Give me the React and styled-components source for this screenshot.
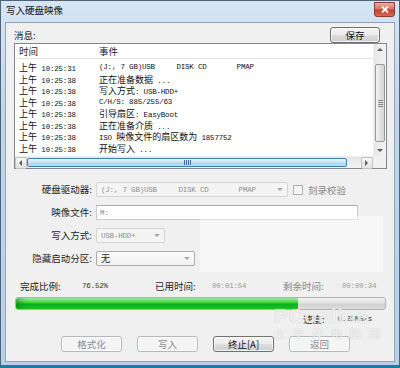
import React from 'react';
import styled, { createGlobalStyle } from 'styled-components';

const CJK = '"Noto Sans CJK SC", "Liberation Sans", sans-serif';
const MONO = '"Liberation Mono", "Noto Sans CJK SC", monospace';

const GlobalStyle = createGlobalStyle`
	html, body {
		margin: 0;
		padding: 0;
		background: #ffffff;
	}
	body {
		width: 400px;
		height: 368px;
		overflow: hidden;
		font-family: ${CJK};
	}
`;

const Frame = styled.div`
	box-sizing: border-box;
	width: 400px;
	height: 368px;
	display: flex;
	flex-direction: column;
	background: linear-gradient(#d6e5f4, #c2d7ec 30%, #b7cfe7);
	border: 1px solid #4f6378;
	border-bottom: 3px solid #1d7aa0;
	padding: 0 4px 3px 4px;
`;

const TitleBar = styled.div`
	height: 21px;
	display: flex;
	justify-content: space-between;
	align-items: flex-start;
`;

const Title = styled.span`
	margin: 3px 0 0 1px;
	font-size: 9.5px;
	line-height: 12px;
	color: #111;
`;

const CloseButton = styled.div`
	box-sizing: border-box;
	width: 21px;
	height: 15px;
	margin: 1px 0 0 0;
	display: flex;
	align-items: center;
	justify-content: center;
	border: 1px solid #8a3a30;
	border-radius: 0 0 3px 3px;
	background: linear-gradient(#eab0a2, #d9735f 45%, #c5402f 55%, #d66a50);
`;

const Body = styled.div`
	position: relative;
	flex: 1;
	display: flex;
	flex-direction: column;
	background: #f0f0f0;
	border: 1px solid #8ea3b9;
	padding: 4px 7px 0 8px;
`;

const HeaderRow = styled.div`
	height: 16px;
	display: flex;
	justify-content: space-between;
	align-items: center;
	padding-right: 7px;
`;

const Caption = styled.span`
	font-size: 9.5px;
	color: ${(p) => (p.dim ? '#8a8a8a' : '#1e1e1e')};
	white-space: nowrap;
`;

const Button = styled.div`
	box-sizing: border-box;
	width: ${(p) => p.width || 61}px;
	height: 16px;
	display: flex;
	align-items: center;
	justify-content: center;
	font-size: 9.5px;
	border-radius: 3px;
	border: 1px solid ${(p) => (p.disabled ? '#b4b8bb' : '#707070')};
	color: ${(p) => (p.disabled ? '#8c8c8c' : '#111')};
	background: ${(p) =>
		p.disabled
			? '#f4f4f4'
			: 'linear-gradient(#f4f4f4, #ebebeb 48%, #dddddd 52%, #cfcfcf)'};
	box-shadow: inset 0 0 0 1px rgba(255, 255, 255, 0.7);
`;

const ListBox = styled.div`
	box-sizing: border-box;
	height: 126px;
	border: 1px solid #828790;
	background: #ffffff;
	display: grid;
	grid-template-columns: 1fr 13px;
	grid-template-rows: 1fr 12px;
`;

const ListContent = styled.div`
	overflow: hidden;
`;

const ListHeader = styled.div`
	height: 14px;
	display: flex;
	align-items: center;
	border-bottom: 1px solid #e5e5e5;
	font-size: 9.5px;
	color: #1e1e1e;
`;

const Row = styled.div`
	height: 11.5px;
	line-height: 11.5px;
	display: flex;
	font-family: ${MONO};
	font-size: 7.5px;
	letter-spacing: -0.2px;
	color: #111;
	white-space: pre;
`;

const Cell = styled.div`
	box-sizing: border-box;
	padding-left: 4px;
	width: ${(p) => (p.wide ? 'auto' : '80px')};
	flex: ${(p) => (p.wide ? 1 : 'none')};
	white-space: pre;
`;

const Rows = styled.div`
	padding-top: 3px;
`;

const Han = styled.span`
	font-family: ${CJK};
	font-size: 9px;
	letter-spacing: 0;
`;

const ScrollTrackV = styled.div`
	display: flex;
	flex-direction: column;
	background: linear-gradient(90deg, #e6e6e6, #f4f4f4);
	border-left: 1px solid #ededed;
`;

const ScrollTrackH = styled.div`
	display: flex;
	background: linear-gradient(#e6e6e6, #f4f4f4);
	border-top: 1px solid #ededed;
`;

const Arrow = styled.div`
	box-sizing: border-box;
	flex: none;
	width: 12px;
	height: ${(p) => (p.vertical ? '11px' : '12px')};
	display: flex;
	align-items: center;
	justify-content: center;
	border: ${(p) => (p.boxed ? '1px solid #c3c3c3' : 'none')};
	border-radius: 2px;
	background: ${(p) => (p.boxed ? 'linear-gradient(#f6f6f6, #e2e2e2)' : 'transparent')};
`;

const Thumb = styled.div`
	box-sizing: border-box;
	display: flex;
	align-items: center;
	justify-content: center;
	border-radius: 2px;
	${(p) =>
		p.vertical
			? `
		margin: 9px 1px 1px 1px;
		height: 78px;
		border: 1px solid #9a9a9a;
		background: linear-gradient(90deg, #f3f3f3, #e2e2e2 50%, #d5d5d5);
	`
			: `
		margin: 1px 0;
		width: 320px;
		border: 1px solid #3c7fb1;
		background: linear-gradient(#e9f6fd, #c6e7fa 45%, #a6d8f5 55%, #b8e1f8);
	`}
`;

const Grip = styled.div`
	display: flex;
	flex-direction: ${(p) => (p.vertical ? 'column' : 'row')};
	gap: 1px;
	span {
		display: block;
		background: ${(p) => (p.vertical ? '#8a8a8a' : '#3d6f98')};
		width: ${(p) => (p.vertical ? '5px' : '1px')};
		height: ${(p) => (p.vertical ? '1px' : '5px')};
	}
`;

const Corner = styled.div`
	background: #f0f0f0;
`;

const Form = styled.div`
	margin-top: 13px;
	display: grid;
	grid-template-columns: 78px 1fr;
	column-gap: 4px;
	row-gap: 8px;
`;

const Label = styled.div`
	height: 15px;
	line-height: 15px;
	font-size: 9.5px;
	text-align: right;
	color: #1e1e1e;
	white-space: nowrap;
`;

const Controls = styled.div`
	display: flex;
	align-items: center;
	gap: 5px;
`;

const Combo = styled.div`
	box-sizing: border-box;
	width: ${(p) => p.width}px;
	height: 15px;
	display: flex;
	align-items: center;
	justify-content: space-between;
	padding: 0 4px 0 4px;
	border: 1px solid ${(p) => (p.disabled ? '#d5d5d5' : '#acacac')};
	border-radius: 2px;
	background: ${(p) => (p.disabled ? '#f4f4f4' : 'linear-gradient(#fbfbfb, #f1f1f1)')};
	color: ${(p) => (p.disabled ? '#8f8f8f' : '#1e1e1e')};
	font-family: ${MONO};
	font-size: 7.5px;
	letter-spacing: -0.2px;
	white-space: pre;
`;

const Caret = styled.span`
	width: 0;
	height: 0;
	border-left: 3px solid transparent;
	border-right: 3px solid transparent;
	border-top: 3px solid ${(p) => (p.disabled ? '#a8a8a8' : '#555')};
`;

const Input = styled.div`
	box-sizing: border-box;
	width: 262px;
	height: 15px;
	display: flex;
	align-items: center;
	padding-left: 3px;
	border: 1px solid #c7c9cd;
	border-top-color: #abadb3;
	background: #ffffff;
	color: #8a8a8a;
	font-family: ${MONO};
	font-size: 7.5px;
`;

const Check = styled.div`
	box-sizing: border-box;
	width: 10px;
	height: 10px;
	border: 1px solid #b0b0b0;
	background: #f4f4f4;
`;

const Stats = styled.div`
	margin-top: 13px;
	height: 12px;
	padding-left: 6px;
	display: grid;
	grid-template-columns: 62px 73px 57px 71px 59px 1fr;
	align-items: center;
`;

const Value = styled.span`
	font-family: ${MONO};
	font-size: 7.5px;
	letter-spacing: -0.2px;
	color: ${(p) => (p.dim ? '#9a9a9a' : '#333')};
	white-space: nowrap;
`;

const Progress = styled.div`
	box-sizing: border-box;
	margin: 6px 1px 0 1px;
	height: 13px;
	border: 1px solid #b2b2b2;
	border-radius: 3px;
	background: linear-gradient(#f2f2f2, #e2e2e2 45%, #d2d2d2 55%, #dcdcdc);
	overflow: hidden;
	display: flex;
`;

const Fill = styled.div`
	height: 100%;
	background: linear-gradient(#9ff09f, #3fd83f 40%, #06b025 55%, #1ec71e);
	box-shadow: inset 10px 0 8px -6px rgba(0, 90, 0, 0.45);
`;

const Speed = styled.div`
	margin-top: 3px;
	height: 12px;
	padding-right: 15px;
	display: flex;
	justify-content: flex-end;
	align-items: center;
	gap: 13px;
`;

const ButtonRow = styled.div`
	margin-top: 11px;
	padding-left: 47px;
	display: flex;
	gap: 15px;
`;

const Haze = styled.div`
	position: absolute;
	left: 194px;
	top: 193px;
	width: 183px;
	height: 56px;
	background: rgba(255, 255, 255, 0.45);
	pointer-events: none;
`;

const Watermark = styled.div`
	position: absolute;
	left: 268px;
	top: 282px;
	display: flex;
	flex-direction: column;
	align-items: flex-start;
	pointer-events: none;
	color: rgba(255, 255, 255, 0.72);
	text-shadow: 0 0 1px rgba(150, 150, 150, 0.55);
	.brand {
		font-family: "Liberation Sans", sans-serif;
		font-weight: 700;
		font-size: 21px;
		line-height: 21px;
		letter-spacing: 0.5px;
	}
	.site {
		font-size: 11px;
		line-height: 14px;
		letter-spacing: 8px;
		font-weight: 700;
	}
`;

const HAN_RE = /([\u3000-\u303f\u4e00-\u9fff\uff00-\uffef]+)/;
const Mixed = ({ text }) =>
	text.split(HAN_RE).map((part, i) => (i % 2 ? <Han key={i}>{part}</Han> : part));

const log = [
	['10:25:31', '(J:, 7 GB)USB     DISK CD       PMAP'],
	['10:25:38', '正在准备数据 ...'],
	['10:25:38', '写入方式: USB-HDD+'],
	['10:25:38', 'C/H/S: 885/255/63'],
	['10:25:38', '引导扇区: EasyBoot'],
	['10:25:38', '正在准备介质 ...'],
	['10:25:38', 'ISO 映像文件的扇区数为 1857752'],
	['10:25:38', '开始写入 ...'],
];

const ArrowGlyph = ({ dir }) => {
	const pts = {
		up: '0,4 3,1 6,4',
		down: '0,1 3,4 6,1',
		left: '4,0 1,3 4,6',
		right: '1,0 4,3 1,6',
	}[dir];
	return (
		<svg width="6" height="6" viewBox="0 0 6 6">
			<polygon points={pts} fill="#5c5c5c" />
		</svg>
	);
};

const App = () => {
	const percent = 76.52;
	return (
		<>
			<GlobalStyle />
			<Frame>
				<TitleBar>
					<Title>写入硬盘映像</Title>
					<CloseButton>
						<svg width="8" height="7" viewBox="0 0 8 7">
							<path d="M1 0.5 L7 6.5 M7 0.5 L1 6.5" stroke="#ffffff" strokeWidth="1.8" />
						</svg>
					</CloseButton>
				</TitleBar>
				<Body>
					<HeaderRow>
						<Caption>消息:</Caption>
						<Button width={50}>保存</Button>
					</HeaderRow>
					<ListBox>
						<ListContent>
							<ListHeader>
								<Cell>时间</Cell>
								<Cell wide>事件</Cell>
							</ListHeader>
							<Rows>
								{log.map(([time, text], i) => (
									<Row key={i}>
										<Cell>
											<Han>上午</Han> {time}
										</Cell>
										<Cell wide>
											<Mixed text={text} />
										</Cell>
									</Row>
								))}
							</Rows>
						</ListContent>
						<ScrollTrackV>
							<Arrow vertical>
								<ArrowGlyph dir="up" />
							</Arrow>
							<Thumb vertical>
								<Grip vertical>
									<span />
									<span />
									<span />
									<span />
								</Grip>
							</Thumb>
							<div style={{ flex: 1 }} />
							<Arrow vertical>
								<ArrowGlyph dir="down" />
							</Arrow>
						</ScrollTrackV>
						<ScrollTrackH>
							<Arrow boxed>
								<ArrowGlyph dir="left" />
							</Arrow>
							<Thumb>
								<Grip>
									<span />
									<span />
									<span />
									<span />
								</Grip>
							</Thumb>
							<div style={{ flex: 1 }} />
							<Arrow boxed>
								<ArrowGlyph dir="right" />
							</Arrow>
						</ScrollTrackH>
						<Corner />
					</ListBox>

					<Form>
						<Label>硬盘驱动器:</Label>
						<Controls>
							<Combo width={192} disabled>
								<span>{'(J:, 7 GB)USB     DISK CD       PMAP'}</span>
								<Caret disabled />
							</Combo>
							<Check />
							<Caption dim>刻录校验</Caption>
						</Controls>
						<Label>映像文件:</Label>
						<Controls>
							<Input>M:</Input>
						</Controls>
						<Label>写入方式:</Label>
						<Controls>
							<Combo width={69} disabled>
								<span>USB-HDD+</span>
								<Caret disabled />
							</Combo>
						</Controls>
						<Label>隐藏启动分区:</Label>
						<Controls>
							<Combo width={99}>
								<Han>无</Han>
								<Caret disabled />
							</Combo>
						</Controls>
					</Form>

					<Stats>
						<Caption>完成比例:</Caption>
						<Value>{percent.toFixed(2)}%</Value>
						<Caption>已用时间:</Caption>
						<Value dim>00:01:54</Value>
						<Caption dim>剩余时间:</Caption>
						<Value dim>00:00:34</Value>
					</Stats>

					<Progress>
						<Fill style={{ width: `${percent}%` }} />
					</Progress>

					<Speed>
						<Caption>速度:</Caption>
						<Value>6.23MB/s</Value>
					</Speed>

					<ButtonRow>
						<Button disabled>格式化</Button>
						<Button disabled>写入</Button>
						<Button>终止[A]</Button>
						<Button disabled>返回</Button>
					</ButtonRow>

					<Haze />
					<Watermark>
						<span className="brand">PConline</span>
						<span className="site">太平洋电脑网</span>
					</Watermark>
				</Body>
			</Frame>
		</>
	);
};

export default App;
